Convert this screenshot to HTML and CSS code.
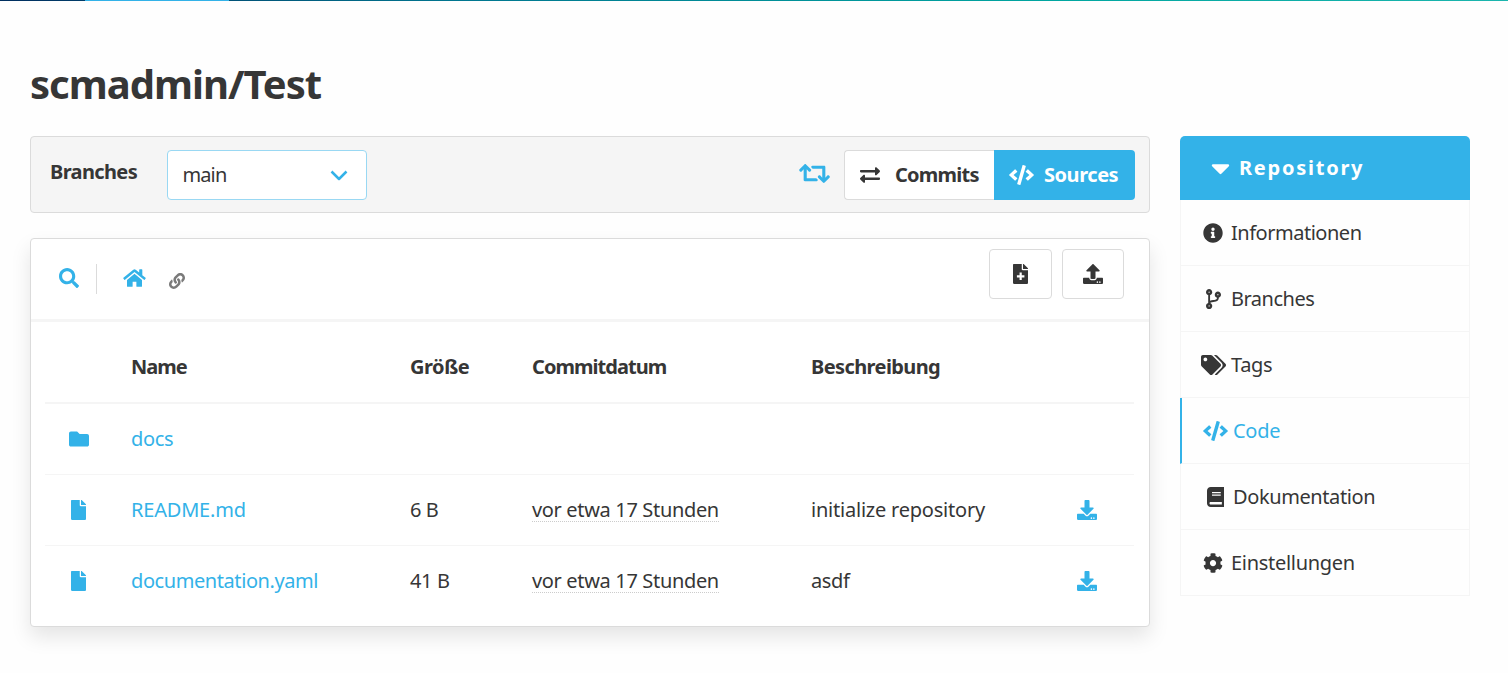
FILE: index.html
```
<!DOCTYPE html>
<html lang="de">
<head>
<meta charset="utf-8">
<title>scmadmin/Test</title>
<link rel="stylesheet" href="styles.css">
</head>
<body>
<svg class="sprite" aria-hidden="true">
<symbol id="search" viewBox="0 0 512 512"><path d="M505 442.700L405.300 343c-4.500-4.500-10.600-7-17-7H372c27.600-35.300 44-79.700 44-128C416 93.100 322.900 0 208 0S0 93.100 0 208s93.100 208 208 208c48.300 0 92.700-16.400 128-44v16.300c0 6.400 2.500 12.500 7 17l99.700 99.700c9.400 9.400 24.600 9.400 33.900 0l28.300-28.300c9.400-9.400 9.400-24.600.1-34zM208 336c-70.700 0-128-57.200-128-128 0-70.700 57.200-128 128-128 70.700 0 128 57.200 128 128 0 70.700-57.200 128-128 128z"/></symbol>
<symbol id="home" viewBox="0 0 576 512"><path d="M288 148L96 307v157a16 16 0 0 0 16 16h112a16 16 0 0 0 16-16V352h96v112a16 16 0 0 0 16 16h112a16 16 0 0 0 16-16V307zM571.600 251.470L488 182.560V44.050a12 12 0 0 0-12-12h-56a12 12 0 0 0-12 12v72.610L318.470 43a48 48 0 0 0-61 0L4.340 251.470a12 12 0 0 0-1.600 16.900l25.500 31A12 12 0 0 0 45.150 301l235.220-193.740a12.190 12.190 0 0 1 15.300 0L530.900 301a12 12 0 0 0 16.900-1.600l25.500-31a12 12 0 0 0-1.700-16.930z"/></symbol>
<symbol id="link" viewBox="0 0 512 512"><path d="M326.612 185.391c59.747 59.809 58.927 155.698.36 214.59-.11.12-.24.25-.36.37l-67.2 67.2c-59.27 59.27-155.699 59.262-214.96 0-59.27-59.26-59.27-155.7 0-214.96l37.106-37.106c9.84-9.84 26.786-3.3 27.294 10.606.648 17.722 3.826 35.527 9.69 52.721 1.986 5.822.567 12.262-3.783 16.612l-13.087 13.087c-28.026 28.026-28.905 73.66-1.155 101.96 28.024 28.579 74.086 28.749 102.325.51l67.2-67.19c28.191-28.191 28.073-73.757 0-101.83-3.701-3.694-7.429-6.564-10.341-8.569a16.037 16.037 0 0 1-6.947-12.606c-.396-10.567 3.348-21.456 11.698-29.806l21.054-21.055c5.521-5.521 14.182-6.199 20.584-1.731a152.482 152.482 0 0 1 20.522 17.197zM467.547 44.449c-59.261-59.262-155.69-59.27-214.96 0l-67.2 67.2c-.12.12-.25.25-.36.37-58.566 58.892-59.387 154.781.36 214.59a152.454 152.454 0 0 0 20.521 17.196c6.402 4.468 15.064 3.789 20.584-1.731l21.054-21.055c8.35-8.35 12.094-19.239 11.698-29.806a16.037 16.037 0 0 0-6.947-12.606c-2.912-2.005-6.64-4.875-10.341-8.569-28.073-28.073-28.191-73.639 0-101.83l67.2-67.19c28.239-28.239 74.3-28.069 102.325.51 27.75 28.3 26.872 73.934-1.155 101.96l-13.087 13.087c-4.35 4.35-5.769 10.79-3.783 16.612 5.864 17.194 9.042 34.999 9.69 52.721.509 13.906 17.454 20.446 27.294 10.606l37.106-37.106c59.271-59.259 59.271-155.699.001-214.959z"/></symbol>
<symbol id="folder" viewBox="0 0 512 512"><path d="M464 128H272l-64-64H48C21.490 64 0 85.490 0 112v288c0 26.510 21.490 48 48 48h416c26.510 0 48-21.490 48-48V176c0-26.510-21.490-48-48-48z"/></symbol>
<symbol id="file" viewBox="0 0 384 512"><path d="M224 136V0H24C10.700 0 0 10.700 0 24v464c0 13.300 10.700 24 24 24h336c13.300 0 24-10.700 24-24V160H248c-13.200 0-24-10.800-24-24zm160-14.100v6.100H256V0h6.100c6.400 0 12.500 2.500 17 7l97.900 98c4.500 4.500 7 10.600 7 16.900z"/></symbol>
<symbol id="file-plus" viewBox="0 0 384 512"><path fill-rule="evenodd" d="M224 136V0H24C10.700 0 0 10.700 0 24v464c0 13.300 10.700 24 24 24h336c13.300 0 24-10.700 24-24V160H248c-13.200 0-24-10.800-24-24zM384 121.900v6.100H256V0h6.100c6.400 0 12.500 2.500 17 7l97.900 98c4.500 4.500 7 10.600 7 16.900zM168 220h56v68h68v56h-68v68h-56v-68h-68v-56h68z"/></symbol>
<symbol id="download" viewBox="0 0 512 512"><path d="M216 0h80c13.300 0 24 10.700 24 24v168h87.700c17.800 0 26.700 21.500 14.100 34.100L269.700 378.300c-7.500 7.500-19.800 7.500-27.300 0L90.100 226.100c-12.600-12.600-3.700-34.100 14.100-34.100H192V24c0-13.300 10.700-24 24-24zm296 376v112c0 13.300-10.700 24-24 24H24c-13.300 0-24-10.700-24-24V376c0-13.300 10.700-24 24-24h146.700l49 49c20.100 20.100 52.500 20.100 72.600 0l49-49H488c13.300 0 24 10.700 24 24zm-124 88c0-11-9-20-20-20s-20 9-20 20 9 20 20 20 20-9 20-20zm64 0c0-11-9-20-20-20s-20 9-20 20 9 20 20 20 20-9 20-20z"/></symbol>
<symbol id="upload" viewBox="0 0 512 512"><path d="M296 384h-80c-13.300 0-24-10.700-24-24V192h-87.700c-17.800 0-26.700-21.500-14.100-34.100L242.300 5.700c7.500-7.500 19.800-7.500 27.300 0l152.200 152.200c12.600 12.600 3.700 34.100-14.100 34.100H320v168c0 13.300-10.700 24-24 24zm216-8v112c0 13.300-10.700 24-24 24H24c-13.300 0-24-10.700-24-24V376c0-13.300 10.700-24 24-24h136v8c0 30.900 25.100 56 56 56h80c30.900 0 56-25.100 56-56v-8h136c13.300 0 24 10.700 24 24zm-124 88c0-11-9-20-20-20s-20 9-20 20 9 20 20 20 20-9 20-20zm64 0c0-11-9-20-20-20s-20 9-20 20 9 20 20 20 20-9 20-20z"/></symbol>
<symbol id="code" viewBox="0 0 640 512"><path d="M278.900 511.500l-61-17.700c-6.400-1.800-10-8.500-8.200-14.900L346.200 8.700c1.800-6.400 8.500-10 14.900-8.200l61 17.700c6.400 1.800 10 8.500 8.200 14.900L293.800 503.300c-1.900 6.400-8.500 10.100-14.900 8.200zm-114-112.200l43.500-46.400c4.600-4.900 4.300-12.700-.8-17.200L117 256l90.600-79.700c5.100-4.500 5.500-12.300.8-17.200l-43.500-46.400c-4.500-4.800-12.100-5.100-17-.5L3.800 247.200c-5.100 4.700-5.100 12.800 0 17.500l144.100 135.100c4.900 4.600 12.500 4.400 17-.5zm327.200.6l144.100-135.100c5.100-4.700 5.100-12.800 0-17.500L492.100 112.100c-4.800-4.500-12.400-4.300-17 .5L431.600 159c-4.600 4.900-4.300 12.700.8 17.200L523 256l-90.600 79.700c-5.100 4.500-5.500 12.300-.8 17.200l43.500 46.400c4.500 4.900 12.100 5.100 17 .6z"/></symbol>
<symbol id="exchange" viewBox="0 0 512 512"><path d="M0 168v-16c0-13.255 10.745-24 24-24h360V80c0-21.367 25.899-32.042 40.971-16.971l80 80c9.372 9.373 9.372 24.569 0 33.941l-80 80C409.956 271.982 384 261.456 384 240v-48H24c-13.255 0-24-10.745-24-24zm488 152H128v-48c0-21.314-25.862-32.080-40.971-16.971l-80 80c-9.372 9.373-9.372 24.569 0 33.941l80 80C102.057 463.997 128 453.437 128 432v-48h360c13.255 0 24-10.745 24-24v-16c0-13.255-10.745-24-24-24z"/></symbol>
<symbol id="retweet" viewBox="0 0 640 512"><path d="M629.657 343.598L528.971 444.284c-9.373 9.372-24.568 9.372-33.941 0L394.343 343.598c-9.373-9.373-9.373-24.569 0-33.941l10.823-10.823c9.562-9.562 25.133-9.340 34.419.492L480 342.118V160H292.451a24.005 24.005 0 0 1-16.971-7.029l-16-16C244.361 121.851 255.069 96 276.451 96H520c13.255 0 24 10.745 24 24v222.118l40.416-42.792c9.285-9.831 24.856-10.054 34.419-.492l10.823 10.823c9.372 9.372 9.372 24.569-.001 33.941zm-265.138 15.431A23.999 23.999 0 0 0 347.548 352H160V169.881l40.416 42.792c9.286 9.831 24.856 10.054 34.419.491l10.822-10.822c9.373-9.373 9.373-24.569 0-33.941L144.971 67.716c-9.373-9.373-24.569-9.373-33.941 0L10.343 168.402c-9.373 9.373-9.373 24.569 0 33.941l10.822 10.822c9.562 9.562 25.133 9.340 34.419-.491L96 169.881V392c0 13.255 10.745 24 24 24h243.549c21.382 0 32.090-25.851 16.971-40.971l-16.001-16z"/></symbol>
<symbol id="info" viewBox="0 0 512 512"><path d="M256 8C119.043 8 8 119.083 8 256c0 136.997 111.043 248 248 248s248-111.003 248-248C504 119.083 392.957 8 256 8zm0 110c23.196 0 42 18.804 42 42s-18.804 42-42 42-42-18.804-42-42 18.804-42 42-42zm56 254c0 6.627-5.373 12-12 12h-88c-6.627 0-12-5.373-12-12v-24c0-6.627 5.373-12 12-12h12v-64h-12c-6.627 0-12-5.373-12-12v-24c0-6.627 5.373-12 12-12h64c6.627 0 12 5.373 12 12v100h12c6.627 0 12 5.373 12 12v24z"/></symbol>
<symbol id="branch" viewBox="0 0 384 512"><path d="M384 144c0-44.200-35.800-80-80-80s-80 35.800-80 80c0 36.400 24.300 67.100 57.500 76.800-.6 16.100-4.200 28.500-11 36.900-15.400 19.200-49.300 22.400-85.200 25.700-28.200 2.600-57.400 5.400-81.300 16.900v-144c32.500-10.200 56-40.500 56-76.300 0-44.200-35.800-80-80-80S0 35.800 0 80c0 35.800 23.500 66.100 56 76.300v199.300C23.500 365.900 0 396.200 0 432c0 44.200 35.800 80 80 80s80-35.800 80-80c0-34-21.200-63.100-51.200-74.600 3.100-5.200 7.800-9.800 14.900-13.400 16.200-8.200 40.400-10.400 66.100-12.800 42.200-3.900 90-8.400 118.200-43.400 14-17.400 21.100-39.800 21.600-67.900 31.600-10.800 54.400-40.700 54.400-75.900zM80 64c8.800 0 16 7.200 16 16s-7.200 16-16 16-16-7.200-16-16 7.200-16 16-16zm0 384c-8.800 0-16-7.200-16-16s7.200-16 16-16 16 7.200 16 16-7.200 16-16 16zm224-320c8.800 0 16 7.200 16 16s-7.200 16-16 16-16-7.200-16-16 7.200-16 16-16z"/></symbol>
<symbol id="tags" viewBox="0 0 640 512"><path d="M497.941 225.941L286.059 14.059A48 48 0 0 0 252.118 0H48C21.490 0 0 21.490 0 48v204.118a48 48 0 0 0 14.059 33.941l211.882 211.882c18.744 18.745 49.136 18.746 67.882 0l204.118-204.118c18.745-18.745 18.745-49.137 0-67.882zM112 160c-26.510 0-48-21.490-48-48s21.490-48 48-48 48 21.490 48 48-21.490 48-48 48zm513.941 133.823L421.823 497.941c-18.745 18.745-49.137 18.745-67.882 0l-.36-.36L527.640 323.522c16.999-16.999 26.360-39.600 26.360-63.640s-9.362-46.641-26.360-63.640L331.397 0h48.721a48 48 0 0 1 33.941 14.059l211.882 211.882c18.745 18.745 18.745 49.137 0 67.882z"/></symbol>
<symbol id="book" viewBox="0 0 448 512"><path d="M448 360V24c0-13.300-10.700-24-24-24H96C43 0 0 43 0 96v320c0 53 43 96 96 96h328c13.300 0 24-10.700 24-24v-16c0-7.500-3.500-14.300-8.900-18.700-4.200-15.400-4.200-59.300 0-74.700 5.400-4.300 8.900-11.100 8.900-18.600zM128 134c0-3.300 2.700-6 6-6h212c3.300 0 6 2.700 6 6v20c0 3.300-2.700 6-6 6H134c-3.300 0-6-2.700-6-6v-20zm0 64c0-3.300 2.700-6 6-6h212c3.300 0 6 2.700 6 6v20c0 3.300-2.700 6-6 6H134c-3.300 0-6-2.700-6-6v-20zm253.400 250H96c-17.700 0-32-14.300-32-32 0-17.600 14.400-32 32-32h285.400c-1.900 17.100-1.900 46.900 0 64z"/></symbol>
<symbol id="cog" viewBox="0 0 512 512"><path d="M487.400 315.700l-42.600-24.600c4.300-23.200 4.300-47 0-70.200l42.600-24.600c4.900-2.800 7.100-8.600 5.500-14-11.100-35.600-30-67.800-54.700-94.600-3.800-4.100-10-5.100-14.800-2.300L380.800 110c-17.900-15.400-38.500-27.300-60.800-35.100V25.800c0-5.600-3.900-10.500-9.400-11.700-36.700-8.200-74.300-7.800-109.200 0-5.500 1.200-9.400 6.100-9.400 11.700V75c-22.200 7.900-42.800 19.800-60.800 35.100L88.700 85.500c-4.900-2.800-11-1.900-14.800 2.300-24.700 26.700-43.600 58.900-54.700 94.600-1.700 5.400.6 11.200 5.500 14L67.300 221c-4.300 23.200-4.300 47 0 70.200l-42.600 24.600c-4.900 2.800-7.100 8.600-5.500 14 11.100 35.600 30 67.800 54.700 94.600 3.800 4.100 10 5.100 14.800 2.300l42.600-24.600c17.900 15.400 38.500 27.300 60.800 35.100v49.200c0 5.600 3.900 10.500 9.400 11.700 36.700 8.200 74.300 7.800 109.200 0 5.500-1.200 9.400-6.100 9.400-11.700v-49.200c22.200-7.900 42.800-19.800 60.800-35.100l42.600 24.600c4.900 2.800 11 1.900 14.800-2.300 24.700-26.700 43.600-58.900 54.700-94.600 1.500-5.500-.7-11.300-5.600-14.100zM256 336c-44.100 0-80-35.900-80-80s35.900-80 80-80 80 35.900 80 80-35.900 80-80 80z"/></symbol>
<symbol id="caret" viewBox="0 0 320 512"><path d="M31.300 192h257.300c17.800 0 26.700 21.500 14.100 34.100L174.100 354.800c-7.800 7.800-20.500 7.800-28.300 0L17.200 226.100C4.600 213.500 13.500 192 31.300 192z"/></symbol>
</svg>
<div class="topline"><span class="topline-active"></span></div>
<main class="page">
  <h1 class="title"><span class="t-title">scmadmin/Test</span></h1>
  <div class="columns">
    <div class="content">
      <section class="toolbar">
        <span class="label t-branches">Branches</span>
        <div class="select"><span class="t-main">main</span><svg class="chevron" viewBox="0 0 18 12"><path d="M1.500 1.500L9 9l7.500-7.500"/></svg></div>
        <svg class="icon retweet"><use href="#retweet"/></svg>
        <div class="switch">
          <a class="tab"><svg class="icon i20"><use href="#exchange"/></svg><span class="t-commits">Commits</span></a>
          <a class="tab tab-active"><svg class="icon i25"><use href="#code"/></svg><span class="t-sources">Sources</span></a>
        </div>
      </section>
      <section class="card">
        <header class="card-head">
          <svg class="icon i20 blue"><use href="#search"/></svg>
          <span class="divider"></span>
          <svg class="icon home blue"><use href="#home"/></svg>
          <svg class="icon link"><use href="#link"/></svg>
          <div class="actions">
            <a class="button"><svg class="icon i15"><use href="#file-plus"/></svg></a>
            <a class="button upload"><svg class="icon i20"><use href="#upload"/></svg></a>
          </div>
        </header>
        <div class="table">
          <div class="row row-head">
            <span></span><span class="t-name">Name</span><span class="t-size">Größe</span><span class="t-date">Commitdatum</span><span class="t-desc">Beschreibung</span><span></span>
          </div>
          <div class="row">
            <svg class="icon i20 blue cell-icon"><use href="#folder"/></svg><a class="blue t-docs">docs</a><span></span><span></span><span></span><span></span>
          </div>
          <div class="row">
            <svg class="icon i15 blue cell-icon"><use href="#file"/></svg><a class="blue t-readme">README.md</a><span class="t-bytes">6 B</span><span><time class="t-time">vor etwa 17 Stunden</time></span><span class="t-init">initialize repository</span><svg class="icon i20 blue"><use href="#download"/></svg>
          </div>
          <div class="row">
            <svg class="icon i15 blue cell-icon"><use href="#file"/></svg><a class="blue t-yaml">documentation.yaml</a><span class="t-bytes">41 B</span><span><time class="t-time">vor etwa 17 Stunden</time></span><span class="t-asdf">asdf</span><svg class="icon i20 blue"><use href="#download"/></svg>
          </div>
        </div>
      </section>
    </div>
    <aside class="menu">
      <div class="menu-head"><svg class="icon caret"><use href="#caret"/></svg><span class="t-repo">Repository</span></div>
      <a class="item"><span class="slot"><svg class="icon i20"><use href="#info"/></svg></span><span class="t-info">Informationen</span></a>
      <a class="item"><span class="slot"><svg class="icon i15"><use href="#branch"/></svg></span><span class="t-mbranches">Branches</span></a>
      <a class="item"><span class="slot"><svg class="icon i25"><use href="#tags"/></svg></span><span class="t-tags">Tags</span></a>
      <a class="item item-active"><span class="slot wide"><svg class="icon i25"><use href="#code"/></svg></span><span class="t-code">Code</span></a>
      <a class="item"><span class="slot wide"><svg class="icon i17"><use href="#book"/></svg></span><span class="t-doku">Dokumentation</span></a>
      <a class="item"><span class="slot"><svg class="icon i20"><use href="#cog"/></svg></span><span class="t-einst">Einstellungen</span></a>
    </aside>
  </div>
</main>
</body>
</html>
```
FILE: styles.css
```
* { box-sizing: border-box; }
body {
  margin: 0;
  height: 673px;
  overflow: hidden;
  background: #fefefe;
  color: #363636;
  font: 20px/30px "Noto Sans", sans-serif;
}
.sprite { display: none; }
.icon { display: block; flex: none; height: 20px; fill: currentColor; }
.i15 { width: 15px; }
.i17 { width: 17.5px; }
.i20 { width: 20px; }
.i25 { width: 25px; }
.blue { color: #33b2e8; }

.topline { height: 1px; padding-left: 85px; background: linear-gradient(90deg, #002e5f, #00758f 30%, #00a6a0 70%, #1bb5ad); }
.topline-active { display: block; width: 144px; height: 1px; background: #33b2e8; }

.page { padding: 60px 38px 0 30px; }
.title { margin: 0; height: 75px; font-size: 40px; line-height: 45px; font-weight: 700; }
.columns { display: flex; justify-content: space-between; align-items: flex-start; }
.content { width: 1120px; }

.toolbar {
  display: flex;
  align-items: center;
  height: 77px;
  padding: 0 14px 0 19px;
  border: 1px solid #dbdbdb;
  border-radius: 4px;
  background: #f5f5f5;
}
.label { width: 117px; padding-bottom: 5px; font-weight: 700; }
.select {
  display: flex;
  align-items: center;
  justify-content: space-between;
  width: 200px;
  height: 50px;
  padding: 0 18px 0 14.5px;
  border: 1px solid #99d8f3;
  border-radius: 4px;
  background: #fff;
}
.chevron { width: 18px; height: 12px; margin-top: 2px; fill: none; stroke: #33b2e8; stroke-width: 2.500; stroke-linecap: butt; stroke-linejoin: round; }
.retweet { width: 31px; height: 25px; margin: 0 14.5px 2px auto; color: #33b2e8; }
.switch { display: flex; width: 291px; height: 50px; font-weight: 700; }
.tab { display: flex; align-items: center; gap: 15px; width: 150px; padding-left: 15px; border: 1px solid #dbdbdb; border-right: 0; border-radius: 4px 0 0 4px; background: #fff; white-space: nowrap; }
.tab-active { gap: 10px; width: 141px; border: 0; border-radius: 0 4px 4px 0; background: #33b2e8; color: #fff; }

.card {
  height: 389px;
  margin-top: 25px;
  border: 1px solid #dbdbdb;
  border-radius: 4px;
  background: #fff;
  box-shadow: 0 10px 20px rgba(10, 10, 10, .1);
}
.card-head { display: flex; align-items: center; height: 83px; padding: 0 25px 2px 27.5px; border-bottom: 3px solid #f5f5f5; }
.divider { width: 1px; height: 30px; margin: 2px 26px 0 17.5px; background: #dbdbdb; }
.home { width: 23px; }
.link { width: 16px; height: 16px; margin: 5px 0 0 23px; color: #7a7a7a; }
.actions { display: flex; gap: 10px; margin: -9px 0 0 auto; }
.button { display: flex; align-items: center; justify-content: center; width: 63px; height: 50px; border: 1px solid #dbdbdb; border-radius: 4px; background: #fff; }
.upload { width: 62px; }

.table { padding: 0 15px 0 14px; }
.row { display: grid; grid-template-columns: 86px 279px 122px 279px 266px 1fr; align-items: center; height: 71px; border-bottom: 1px solid #f5f5f5; white-space: nowrap; }
.row:last-child { height: 70px; border-bottom: 0; }
.row-head { height: 82px; padding-top: 10px; border-bottom-width: 2px; font-weight: 700; }
.cell-icon { margin-left: 23.5px; }
.cell-icon.i15 { margin-left: 26px; }
.table time { display: inline-block; height: 26px; line-height: 28px; border-bottom: 1px dotted #ccc; }

.menu { width: 290px; }
.menu-head { display: flex; align-items: center; height: 64px; padding-left: 30.5px; border-radius: 5px 5px 0 0; background: #33b2e8; color: #fff; font-weight: 700; }
.caret { width: 19px; height: 30px; margin: 0 9.5px 1px 0; }
.item { display: flex; align-items: center; height: 66px; padding-left: 19.5px; border: 1px solid #f5f5f5; border-top: 0; }
.item-active { padding-left: 18.5px; border-left: 2px solid #33b2e8; color: #33b2e8; }
.slot { display: flex; justify-content: center; width: 25px; margin-right: 5.5px; }
.wide { margin: 0 5px 0 2.5px; }

/* Tracking per text run */
.t-title { letter-spacing: -1px; }
.t-branches { letter-spacing: -.63px; }
.t-main { letter-spacing: -.9px; }
.t-commits { letter-spacing: -.75px; }
.t-sources { letter-spacing: -.45px; }
.t-name { letter-spacing: -1px; }
.t-size { letter-spacing: -.45px; }
.t-date { letter-spacing: -.95px; }
.t-desc { letter-spacing: -.6px; }
.t-docs { letter-spacing: -.35px; }
.t-readme { letter-spacing: -.2px; }
.t-yaml { letter-spacing: -.42px; }
.t-bytes { letter-spacing: -.4px; }
.t-time { letter-spacing: -.34px; }
.t-init { letter-spacing: -.22px; }
.t-asdf { letter-spacing: -.4px; }
.t-repo { letter-spacing: 1.75px; }
.t-info { letter-spacing: -.48px; }
.t-mbranches { letter-spacing: -.5px; }
.t-tags { letter-spacing: -.35px; }
.t-code { letter-spacing: -.3px; }
.t-doku { letter-spacing: -.4px; }
.t-einst { letter-spacing: -.3px; }
```
